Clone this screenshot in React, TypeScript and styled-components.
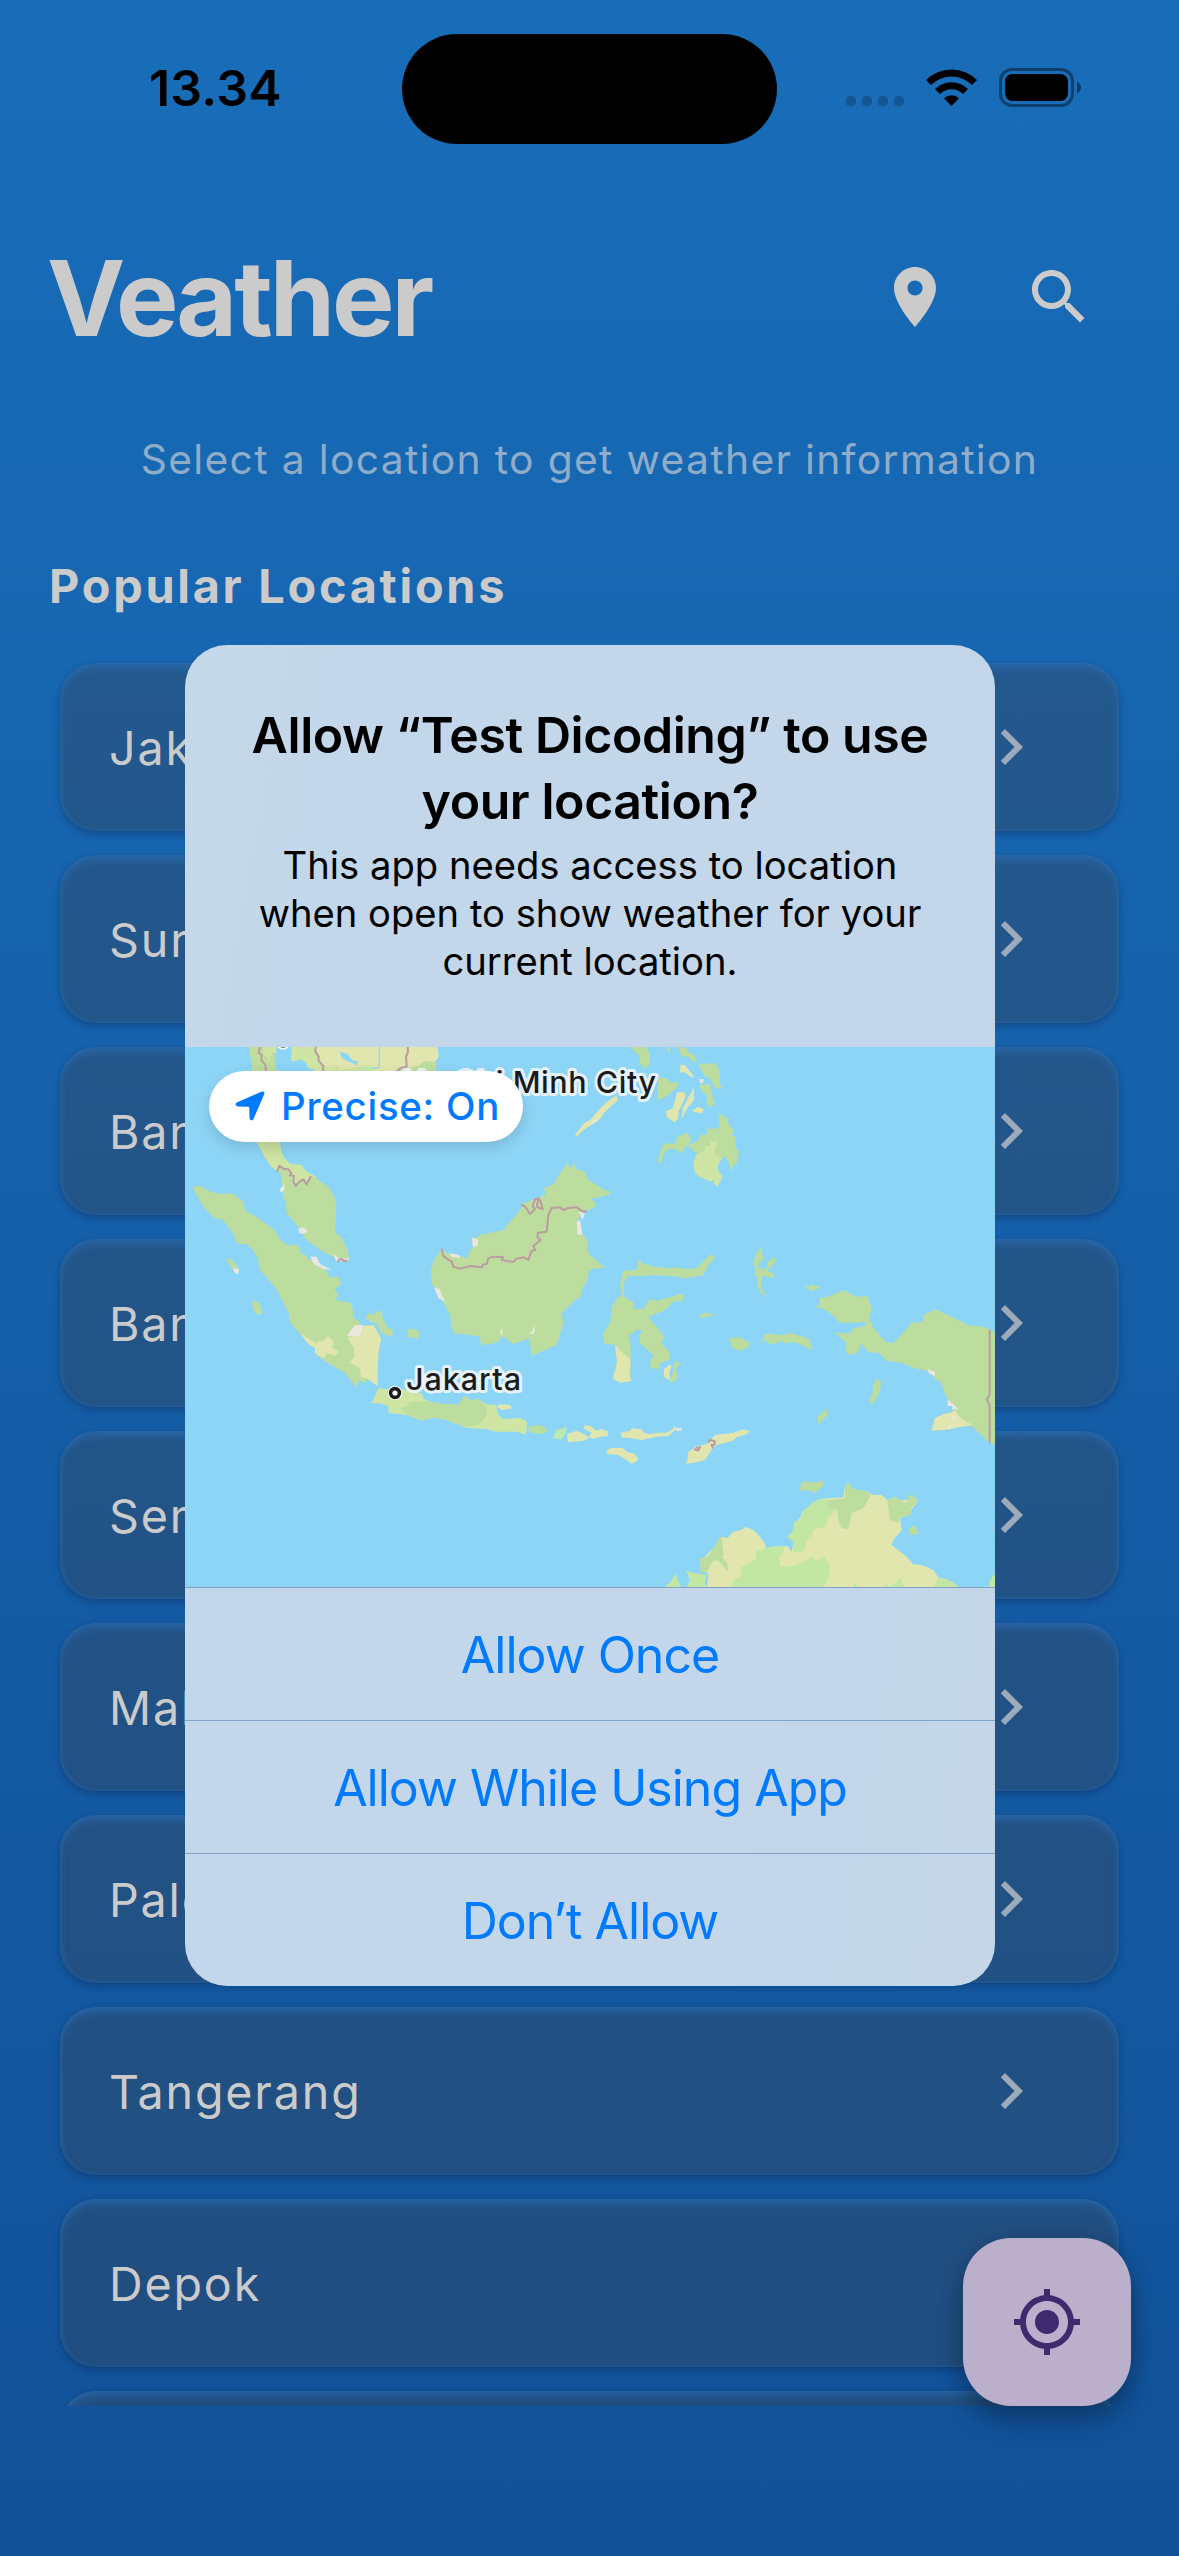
import React from "react";
import styled, { createGlobalStyle } from "styled-components";

const GlobalStyle = createGlobalStyle`
  *, *::before, *::after { box-sizing: border-box; }
  body { margin: 0; font-family: Inter, "Liberation Sans", sans-serif; }
  h1, h2, p { margin: 0; }
  button { font-family: inherit; border: 0; margin: 0; padding: 0; background: none; }
  svg { display: block; }
`;

const Screen = styled.div`
  position: relative;
  display: flex;
  flex-direction: column;
  width: 1179px;
  height: 2556px;
  overflow: hidden;
  background: linear-gradient(180deg, #186db9 0%, #1767b2 22%, #115198 100%);
`;

const StatusBar = styled.header`
  display: grid;
  grid-template-columns: 402px 375px 402px;
  height: 177px;
  padding-top: 34px;
`;

const Clock = styled.div`
  padding: 24px 0 0 149px;
  font-size: 50px;
  line-height: 60px;
  font-weight: 600;
  letter-spacing: 0.2px;
  color: #000;
`;

const Island = styled.div`
  height: 110px;
  border-radius: 55px;
  background: #000;
`;

const StatusIcons = styled.div`
  display: flex;
  align-items: flex-end;
  height: 73px;
  padding-left: 69px;
`;

const SignalDots = styled.div`
  display: flex;
  gap: 6px;
  margin: 0 22px 1px 0;
`;

const Dot = styled.i`
  width: 10px;
  height: 10px;
  border-radius: 4px;
  background: rgba(0, 0, 0, 0.2);
`;

const WifiSlot = styled.div`
  margin: 0 22px 1px 0;
`;

const AppBar = styled.div`
  display: flex;
  align-items: center;
  justify-content: space-between;
  height: 240px;
  padding: 0 48px 0 47px;
`;

const AppTitle = styled.h1`
  padding-top: 2px;
  font-size: 105px;
  line-height: 126px;
  font-weight: 700;
  letter-spacing: -3.1px;
  color: #cbcbcb;
`;

const Actions = styled.div`
  display: flex;
`;

const IconButton = styled.button`
  display: grid;
  place-items: center;
  width: 144px;
  height: 144px;
  color: #cbcbcb;
`;

const Hint = styled.p`
  margin-top: 17px;
  font-size: 40.8px;
  line-height: 50px;
  letter-spacing: 1.32px;
  text-align: center;
  color: #8fadc9;
`;

const SectionTitle = styled.h2`
  margin: 73px 0 0 49px;
  font-size: 46.8px;
  line-height: 58px;
  font-weight: 700;
  letter-spacing: 2.75px;
  color: #cbcbcb;
`;

const LocationList = styled.div`
  display: flex;
  flex-direction: column;
  gap: 24px;
  height: 1791px;
  margin-top: 0;
  padding: 48px 60px 0;
  overflow: hidden;
`;

const LocationCard = styled.div`
  flex: none;
  display: flex;
  align-items: center;
  justify-content: space-between;
  height: 168px;
  padding: 0 72px 0 49px;
  border-radius: 36px;
  color: #cbcbcb;
  font-size: 46.6px;
  letter-spacing: 1.85px;
  background: rgba(54, 72, 92, 0.42);
  box-shadow:
    inset 0 5px 9px rgba(46, 122, 200, 0.45),
    inset 0 0 5px rgba(60, 120, 180, 0.3),
    0 3px 7px rgba(0, 20, 60, 0.3);
`;

const CityName = styled.span`
  padding-top: 2px;
`;

const Chevron = styled.svg`
  color: #9daab9;
`;

const Fab = styled.button`
  position: absolute;
  left: 963px;
  top: 2238px;
  display: grid;
  place-items: center;
  width: 168px;
  height: 168px;
  border-radius: 48px;
  color: #3d2b70;
  background: #bbb0cc;
  box-shadow: 0 16px 26px rgba(0, 0, 0, 0.22), 0 4px 22px rgba(0, 0, 0, 0.16);
`;

const Dialog = styled.section`
  position: absolute;
  left: 185px;
  top: 645px;
  display: flex;
  flex-direction: column;
  width: 810px;
  height: 1341px;
  overflow: hidden;
  border-radius: 42px;
  background: linear-gradient(100deg, #c5d8e8 0%, #c3d7eb 18%, #c3d6ea 70%, #c4d6e8 100%);
`;

const DialogHead = styled.div`
  height: 402px;
  padding-top: 57px;
  text-align: center;
  color: #000;
`;

const DialogTitle = styled.h2`
  font-size: 50px;
  line-height: 66px;
  font-weight: 600;
  letter-spacing: -0.43px;
`;

const DialogText = styled.p`
  margin-top: 7px;
  font-size: 38.2px;
  line-height: 48px;
`;

const MapBox = styled.div`
  position: relative;
  height: 540px;
  background: #8dd5f7;
`;

const PrecisePill = styled.button`
  position: absolute;
  left: 24px;
  top: 24px;
  display: flex;
  align-items: center;
  gap: 16px;
  width: 314px;
  height: 71px;
  padding: 0 0 1px 26px;
  border-radius: 36px;
  font-size: 38.4px;
  font-weight: 500;
  letter-spacing: 0.75px;
  white-space: nowrap;
  color: #007aff;
  background: #fff;
  box-shadow: 0 6px 16px rgba(0, 0, 0, 0.14);
`;

const DialogButton = styled.button`
  height: 133px;
  padding-top: 2px;
  border-top: 1px solid #82a3c8;
  font-size: 50px;
  line-height: 130px;
  letter-spacing: -1px;
  color: #007aff;
`;

const GREEN = "#bddd9f";
const LIME = "#cfe5a3";
const TAN = "#e1e6ae";
const MINT = "#c2e7a4";
const SAND = "#ebe6e0";

type Shape = [fill: string, points: string];

const northWest: Shape[] = [
  [GREEN, "205,15 210,45 216,70 215,95 292,95 284,70 288,40 280,15"],
  [LIME, "250,15 290,15 288,40 278,38 265,70 262,50 248,40"],
  [LIME, "336,15 333,64 350,62 362,58 378,68 385,85 402,88 405,95 560,95 560,15"],
  [TAN, "400,15 415,50 430,75 445,85 470,75 480,88 520,85 550,75 580,90 580,15"],
  [TAN, "560,15 772,15 776,50 765,66 700,95 575,95"],
  [GREEN, "645,95 690,82 715,78 735,62 770,68 768,95"],
  ["#bbeab0", "553,80 578,75 580,95 553,95"],
  ["#8dd5f7", "480,36 500,40 519,62 535,64 530,76 517,68 498,62 484,52"],
  [LIME, "225,300 300,300 303,330 312,352 330,371 365,375 380,395 410,410 380,434 347,438 300,382 290,393 272,378 250,345 238,320"],
  [GREEN, "298,376 315,384 330,402 345,438 372,420 380,434 396,408 420,422 445,440 467,478 469,500 465,575 487,598 502,630 508,658 492,652 482,658 460,650 435,640 400,615 380,600 365,578 355,560 320,520 318,490 308,465 312,445 303,425 306,408 294,392"],
  [GREEN, "37,442 60,437 85,452 115,461 150,460 165,464 190,485 195,512 225,528 250,545 285,572 300,600 325,617 345,612 360,625 362,640 378,645 385,660 405,660 415,680 432,684 450,712 475,710 484,733 462,748 475,760 468,780 515,790 522,832 542,848 530,868 560,855 582,856 603,895 595,940 592,1038 560,1015 558,1030 537,1022 531,1042 490,995 470,985 430,960 405,940 405,925 385,912 360,880 332,850 325,815 305,780 295,755 275,730 240,690 232,650 220,632 200,612 175,612 165,600 160,582 130,540 105,535 70,500"],
  [SAND, "500,888 525,855 550,855 540,890"],
  [TAN, "550,857 580,856 603,895 595,940 592,1038 565,1018 543,1012 540,985 508,967 523,952 522,925 502,892 540,890"],
  [TAN, "330,845 360,880 378,890 410,912 418,900 428,905 445,888 462,905 455,922 478,935 465,947 440,940 430,955 405,940 405,925 385,912 360,880"],
  [SAND, "355,566 372,562 383,575 368,582 358,580"],
  [SAND, "460,640 475,655 508,655 505,664 468,664"],
  [SAND, "390,650 410,650 420,672 455,690 430,688 402,672"],
  [GREEN, "140,655 152,655 176,685 172,698 158,685 148,675"],
  [SAND, "158,684 177,688 175,702 165,700"],
  [GREEN, "215,790 225,781 238,790 248,820 235,825 222,812"],
  [GREEN, "555,834 570,818 585,825 590,812 605,815 610,840 625,865 640,870 635,892 605,880 590,850 572,845"],
  [GREEN, "683,870 700,865 718,876 714,898 700,893 685,892"],
  [GREEN, "785,628 800,640 835,646 862,655 870,630 880,622 875,600 900,585 970,570 990,545 1020,510 1035,488 1070,475 1098,462 1092,445 1120,432 1140,400 1162,368 1170,385 1183,370 1190,388 1215,395 1225,420 1250,435 1275,450 1292,455 1285,465 1260,472 1235,475 1250,498 1232,508 1205,514 1195,540 1190,580 1210,585 1225,605 1220,625 1230,645 1275,683 1240,686 1228,690 1220,725 1205,750 1200,775 1185,780 1145,820 1150,850 1140,885 1130,915 1095,930 1055,948 1048,895 1020,905 1000,912 967,888 950,908 905,915 897,888 865,885 840,880 825,885 815,860 810,825 790,785 780,755 757,735 752,690 765,655"],
  [SAND, "876,592 895,600 893,618 878,620"],
  [SAND, "1190,545 1200,540 1208,585 1192,583"],
  [SAND, "1196,515 1215,520 1207,540"],
  [SAND, "762,742 780,748 785,765 797,785 775,775"],
  [SAND, "808,640 838,645 840,655 815,650"],
  [SAND, "1062,855 1065,870 1060,882 1048,880 1058,872"],
  [SAND, "964,862 968,880 966,890 961,875"],
  [SAND, "298,450 312,432 314,448 305,458"],
];

const northEast: Shape[] = [
  [TAN, "82,165 82,182 48,212 25,242 -20,270 -42,292 -44,283 -18,250 0,240 35,200 58,180"],
  [SAND, "30,232 12,248 2,250 14,238"],
  [GREEN, "115,15 165,15 180,42 178,75 165,87 150,70 148,48"],
  [GREEN, "230,15 242,30 235,38"],
  [GREEN, "262,15 290,26 302,42 316,45 315,68 303,62 300,52 275,48"],
  [GREEN, "325,72 376,70 390,95 388,130 396,145 375,145 362,118 345,108"],
  [TAN, "272,73 285,76 313,110 305,112 282,96 270,98"],
  [GREEN, "205,110 235,118 240,128 265,126 262,142 250,152 225,172 203,180"],
  [GREEN, "328,130 340,135 360,132 368,170 374,190 362,203 350,190 350,165 332,150"],
  [SAND, "328,118 342,118 338,130 330,128"],
  [TAN, "262,155 285,158 285,175 265,215 265,235 254,247 230,230 228,214 248,205"],
  [TAN, "312,142 312,180 292,205 275,237 278,205"],
  [TAN, "305,212 325,200 340,208 338,220 315,216"],
  [GREEN, "385,220 412,235 415,250 432,272 424,285 438,292 435,320 447,335 440,370 428,375 425,400 418,370 405,350 385,355 375,350 335,345 320,340 294,318 325,300 332,284 350,284 352,262 372,268 390,260"],
  [LIME, "362,303 382,303 380,315 373,325 375,345 397,355 385,372 383,388 398,410 382,440 370,430 372,418 362,425 330,410 315,400 310,370 318,345 345,330 345,318 360,318"],
  [GREEN, "203,365 212,330 222,312 240,310 255,312 262,290 290,278 302,290 300,312 280,325 282,342 262,330 240,325 225,335 213,370"],
  [GREEN, "145,662 150,662 160,672 180,674 190,680 245,685 260,682 290,688 320,684 340,665 362,643 375,652 352,680 340,705 315,710 290,715 245,708 190,706 150,708 115,708 103,725 100,760 106,775 130,785 133,808 160,806 180,778 200,782 245,770 265,762 280,765 280,780 250,785 225,810 190,825 175,832 210,872 222,890 215,910 240,938 238,960 210,968 207,986 182,985 180,965 190,945 150,910 148,885 158,870 140,869 115,888 122,910 122,1020 70,1018 80,960 75,915 42,910 40,880 60,850 66,800 85,770 95,770 90,735 98,700 105,690 120,692 140,688"],
  [TAN, "75,915 95,935 122,960 118,1005 125,1023 90,1028 68,1015 82,970"],
  [GREEN, "518,618 515,635 520,655 503,678 515,688 530,684 535,665 555,650 556,668 530,692 553,702 553,713 515,708 512,740 532,772 515,760 503,742 502,713 494,702 499,688 489,672 498,640"],
  [GREEN, "643,742 658,738 665,733 692,743 678,748 668,753"],
  [GREEN, "328,823 350,818 378,825 350,830 335,836"],
];

const southWest: Shape[] = [
  [LIME, "572,310 580,300 595,265 625,268 640,265 705,272 725,282 735,300 770,310 835,315 848,295 858,288 870,300 895,298 920,313 948,315 955,345 970,357 1020,353 1042,365 1038,405 1010,395 950,395 920,388 860,383 820,368 795,358 765,354 740,355 725,362 680,345 625,338 625,318 600,310"],
  [GREEN, "680,308 735,303 770,310 835,315 848,295 858,288 870,300 895,298 920,320 920,345 898,372 860,380 820,368 795,358 765,354 725,360 680,342 660,325 690,315"],
  [TAN, "950,320 958,313 988,314 997,325 965,330"],
  [GREEN, "1042,382 1075,375 1090,380 1106,392 1080,403 1050,397"],
  ["#bbeab0", "1118,415 1130,388 1160,383 1158,398 1145,418"],
  [TAN, "1162,402 1190,392 1213,403 1225,412 1235,398 1212,386 1214,376 1232,378 1248,392 1262,388 1282,392 1285,408 1262,410 1240,417 1230,412 1210,422 1163,427"],
];

const southEast: Shape[] = [
  [TAN, "222,208 240,193 245,200 238,215 240,240 222,230"],
  [GREEN, "250,188 268,185 268,195 258,205 262,235 248,247 238,245 248,220"],
  [GREEN, "418,115 450,112 465,120 480,130 475,142 450,152 425,143"],
  [GREEN, "525,103 545,100 550,105 575,103 580,107 595,98 640,110 648,118 655,112 668,150 640,138 622,130 598,125 590,132 575,122 550,132 540,132 525,118 515,132 518,118"],
  [GREEN, "862,235 873,245 870,275 860,290 850,312 837,305 848,280 850,252"],
  [GREEN, "712,325 710,348 685,372 682,350 700,335"],
  [TAN, "92,398 120,392 125,385 155,388 162,398 180,402 205,398 230,398 250,388 250,378 262,385 235,408 200,410 155,420 125,415 95,412"],
  [TAN, "48,455 60,445 98,443 110,455 135,462 145,480 125,492 110,480 85,465 55,462"],
  [TAN, "285,492 292,485 295,455 320,438 350,432 375,405 430,398 460,388 480,393 470,403 440,412 428,422 380,435 365,450 345,480 320,487"],
  [GREEN, "675,25 690,10 690,-5 720,-12 760,-30 800,-10 832,-12 845,25 838,55 848,80 865,100 885,125 910,130 945,92 965,68 998,65 1000,45 1035,28 1080,48 1135,75 1180,80 1215,95 1215,433 1200,430 1145,378 1110,380 1080,388 1025,390 1035,355 1085,335 1100,320 1080,310 1060,270 1055,250 1035,235 1010,212 975,205 935,188 890,182 868,160 835,155 815,130 800,160 780,165 765,155 770,130 745,105 730,98 780,100 790,85 825,78 828,65 800,68 750,68 725,42 690,22"],
  [TAN, "1025,392 1035,355 1060,342 1085,338 1095,330 1115,358 1148,375 1110,380 1080,388"],
  [SAND, "1073,300 1090,312 1105,328 1085,328 1088,318 1073,318"],
  [SAND, "1012,207 1035,215 1035,228 1018,220"],
  [SAND, "1085,345 1100,350 1090,362 1080,388 1072,385 1090,360"],
  [SAND, "257,384 275,385 275,392 260,392"],
  [GREEN, "628,572 633,552 645,542 655,548 700,544 702,556 675,578 655,570"],
  [TAN, "350,862 355,825 340,800 345,770 370,745 395,710 412,715 430,695 455,690 465,680 490,690 510,710 527,735 525,760 545,740 580,740 592,738 605,755 612,720 595,710 610,690 620,665 665,610 690,597 760,592 765,558 775,550 790,568 835,575 845,585 875,585 892,600 915,590 930,600 955,600 965,585 985,603 962,630 962,642 930,655 935,690 912,718 905,735 950,770 970,793 995,795 1030,810 1045,832 1075,840 1100,855 1102,862"],
  [GREEN, "330,775 355,768 395,705 398,740 402,765 395,770 412,790 414,815 388,785 372,780 350,815 332,820"],
  [MINT, "222,862 240,848 256,820 273,862"],
  [MINT, "290,862 300,840 288,812 310,818 350,825 345,850 350,862"],
  [MINT, "425,862 428,840 450,830 455,800 495,780 500,752 545,740 578,738 582,755 568,768 570,800 620,795 668,770 675,785 705,768 720,800 715,835 702,862"],
  [MINT, "592,712 610,690 612,665 630,662 635,635 668,610 690,597 715,600 715,620 740,632 715,650 708,680 668,690 665,715 650,720 645,745 632,758 610,755 608,722"],
  [GREEN, "712,600 765,595 765,558 775,550 790,568 835,575 840,590 820,625 785,640 775,687 755,685 745,662 742,630 715,628"],
  [GREEN, "892,600 915,590 930,600 950,610 955,590 965,583 985,603 965,620 962,645 930,652 925,668 900,660"],
  [GREEN, "960,685 970,675 980,685 983,705 960,702"],
  [MINT, "788,862 795,848 805,862"],
  [MINT, "878,862 892,850 897,862 915,850 930,835 945,860 1032,862 1045,835 1075,840 1100,855 1102,862"],
  [MINT, "1195,862 1200,840 1216,820 1216,862"],
];

const borders = [
  "M240,15 L236,38 245,45 244,60 256,75 258,95",
  "M408,15 L406,35 416,50 415,62 430,78 428,95",
  "M683,15 L684,35 678,50 680,80 662,84 648,95",
  "M291,395 L298,377 310,386 325,388 334,400 330,406 342,408 340,425 347,438 358,425 370,418 380,433 393,408",
  "M785,626 L790,648 800,655 815,665 820,680 840,686 870,678 905,682 908,674 920,672 925,655 940,650 970,652 965,660 1000,666 1010,656 1032,652 1045,660 1055,632 1066,630 1060,618 1082,600 1072,592 1074,578 1100,575 1105,525 1115,504 1140,502 1150,510 1165,504 1190,502 1205,512 1220,515",
  "M1022,494 L1036,500 1050,522 1065,508 1058,498 1065,478 1076,475 1070,500 1088,508 1080,478",
  "M472,666 L482,656 492,662 503,662",
  "M2429,870 V1065 L2420,1078 2429,1096 V1210",
  "M1542,1227 L1554,1232 1562,1218 M1548,1222 L1556,1224 M1585,1207 L1590,1200 1604,1204 1604,1214 1594,1214 1600,1226",
];

const Land = ({ shapes, x, y }: { shapes: Shape[]; x: number; y: number }) => (
  <g transform={`translate(${x} ${y}) scale(0.33333)`}>
    {shapes.map(([fill, points], i) => (
      <polygon key={i} points={points} fill={fill} />
    ))}
  </g>
);

const MapLabel = styled.text`
  font-family: Inter, "Liberation Sans", sans-serif;
  font-size: 30.5px;
  font-weight: 500;
  fill: #1b1b1b;
  stroke: rgba(240, 246, 250, 0.92);
  stroke-width: 6px;
  stroke-linejoin: round;
  paint-order: stroke;
`;

const IslandsMap = () => (
  <svg width="810" height="540" viewBox="185 1047 810 540">
    <Land shapes={northWest} x={180} y={1040} />
    <Land shapes={northEast} x={590} y={1040} />
    <Land shapes={southWest} x={180} y={1300} />
    <Land shapes={southEast} x={590} y={1300} />
    <g transform="translate(180 1040) scale(0.33333)" fill="none" strokeLinejoin="round">
      <path d="M598,15 V82 L578,86" stroke="#8dd5f7" strokeWidth="4" />
      {borders.map((d) => (
        <path key={d} d={d} stroke="#bb9ca2" strokeWidth="6" />
      ))}
    </g>
    <ellipse cx="283" cy="1045" rx="5" ry="3.5" fill="#1b1b1b" stroke="#fff" strokeWidth="2" />
    <circle cx="395" cy="1393" r="7.2" fill="#fff" />
    <circle cx="395" cy="1393" r="4.4" fill="#fff" stroke="#1b1b1b" strokeWidth="3.6" />
    <MapLabel x="403" y="1093" textLength="253">Ho Chi Minh City</MapLabel>
    <MapLabel x="406" y="1390" textLength="115">Jakarta</MapLabel>
  </svg>
);

const WifiIcon = () => (
  <svg width="51" height="37" viewBox="0 0 51 37">
    <path d="M0 11 A36 36 0 0 1 51 11 L46 16 A29 29 0 0 0 5 16 Z" />
    <path d="M9 20 A23.5 23.5 0 0 1 42 20 L37 25 A16.5 16.5 0 0 0 14 25 Z" />
    <path d="M18 29.3 A10.8 10.8 0 0 1 33 29.3 L25.5 37 Z" />
  </svg>
);

const BatteryIcon = () => (
  <svg width="83" height="39" viewBox="0 0 83 39">
    <rect x="1.5" y="1.5" width="72" height="36" rx="11.5" fill="none" stroke="#000" strokeOpacity="0.4" strokeWidth="3" />
    <rect x="6" y="6" width="63" height="27" rx="7.5" />
    <path d="M78 13.5 Q82 16 82 19.5 Q82 23 78 25.5 Z" fillOpacity="0.45" />
  </svg>
);

const MaterialIcon = ({ d }: { d: string }) => (
  <svg width="72" height="72" viewBox="0 0 24 24" fill="currentColor">
    <path d={d} />
  </svg>
);

const PLACE =
  "M12 2C8.13 2 5 5.13 5 9c0 5.25 7 13 7 13s7-7.75 7-13c0-3.87-3.13-7-7-7zm0 9.5c-1.38 0-2.5-1.12-2.5-2.5s1.12-2.5 2.5-2.5 2.5 1.12 2.5 2.5-1.12 2.5-2.5 2.5z";
const SEARCH =
  "M15.5 14h-.79l-.28-.27C15.41 12.59 16 11.11 16 9.5 16 5.91 13.09 3 9.5 3S3 5.91 3 9.5 5.91 16 9.5 16c1.61 0 3.09-.59 4.23-1.57l.27.28v.79l5 4.99L20.49 19l-4.99-5zm-6 0C7.01 14 5 11.99 5 9.5S7.01 5 9.5 5 14 7.01 14 9.5 11.99 14 9.5 14z";
const MY_LOCATION =
  "M12 8c-2.21 0-4 1.79-4 4s1.79 4 4 4 4-1.79 4-4-1.79-4-4-4zm8.94 3c-.46-4.17-3.77-7.48-7.94-7.94V1h-2v2.06C6.83 3.52 3.52 6.83 3.06 11H1v2h2.06c.46 4.17 3.77 7.48 7.94 7.94V23h2v-2.06c4.17-.46 7.48-3.77 7.94-7.94H23v-2h-2.06zM12 19c-3.87 0-7-3.13-7-7s3.13-7 7-7 7 3.13 7 7-3.13 7-7 7z";

const cities = [
  "Jakarta",
  "Surabaya",
  "Bandung",
  "Banjarmasin",
  "Semarang",
  "Makassar",
  "Palembang",
  "Tangerang",
  "Depok",
  "",
];

export default function App() {
  return (
    <Screen>
      <GlobalStyle />
      <StatusBar>
        <Clock>13.34</Clock>
        <Island />
        <StatusIcons>
          <SignalDots>
            <Dot />
            <Dot />
            <Dot />
            <Dot />
          </SignalDots>
          <WifiSlot>
            <WifiIcon />
          </WifiSlot>
          <BatteryIcon />
        </StatusIcons>
      </StatusBar>

      <AppBar>
        <AppTitle>Veather</AppTitle>
        <Actions>
          <IconButton aria-label="Saved places">
            <MaterialIcon d={PLACE} />
          </IconButton>
          <IconButton aria-label="Search">
            <MaterialIcon d={SEARCH} />
          </IconButton>
        </Actions>
      </AppBar>

      <Hint>Select a location to get weather information</Hint>
      <SectionTitle>Popular Locations</SectionTitle>

      <LocationList>
        {cities.map((city) => (
          <LocationCard key={city}>
            <CityName>{city}</CityName>
            <Chevron width="72" height="72" viewBox="0 0 24 24" fill="currentColor">
              <path d="M10 6 8.59 7.41 13.17 12l-4.58 4.59L10 18l6-6z" />
            </Chevron>
          </LocationCard>
        ))}
      </LocationList>

      <Fab aria-label="Use my location">
        <MaterialIcon d={MY_LOCATION} />
      </Fab>

      <Dialog role="alertdialog">
        <DialogHead>
          <DialogTitle>
            Allow “Test Dicoding” to use
            <br />
            your location?
          </DialogTitle>
          <DialogText>
            This app needs access to location
            <br />
            when open to show weather for your
            <br />
            current location.
          </DialogText>
        </DialogHead>
        <MapBox>
          <IslandsMap />
          <PrecisePill>
            <svg width="30" height="30" viewBox="0 0 30 30" fill="currentColor">
              <path d="M27 .5 Q30 0 29.3 3 L18.5 28 Q16.5 31 14.6 27.5 L14.2 16.5 Q14.1 15.8 13.4 15.7 L2.5 15.4 Q-1.3 13.6 1.8 11.5 Z" />
            </svg>
            Precise: On
          </PrecisePill>
        </MapBox>
        <DialogButton>Allow Once</DialogButton>
        <DialogButton>Allow While Using App</DialogButton>
        <DialogButton>Don’t Allow</DialogButton>
      </Dialog>
    </Screen>
  );
}
